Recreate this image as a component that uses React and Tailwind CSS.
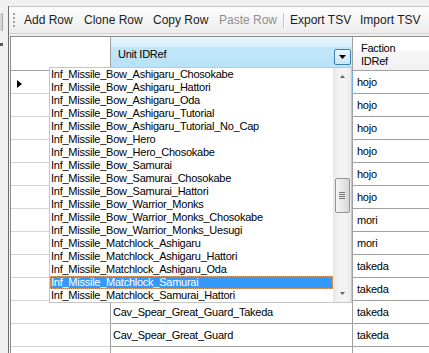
import { useState } from 'react';

const unitOptions = [
    'Inf_Missile_Bow_Ashigaru_Chosokabe',
    'Inf_Missile_Bow_Ashigaru_Hattori',
    'Inf_Missile_Bow_Ashigaru_Oda',
    'Inf_Missile_Bow_Ashigaru_Tutorial',
    'Inf_Missile_Bow_Ashigaru_Tutorial_No_Cap',
    'Inf_Missile_Bow_Hero',
    'Inf_Missile_Bow_Hero_Chosokabe',
    'Inf_Missile_Bow_Samurai',
    'Inf_Missile_Bow_Samurai_Chosokabe',
    'Inf_Missile_Bow_Samurai_Hattori',
    'Inf_Missile_Bow_Warrior_Monks',
    'Inf_Missile_Bow_Warrior_Monks_Chosokabe',
    'Inf_Missile_Bow_Warrior_Monks_Uesugi',
    'Inf_Missile_Matchlock_Ashigaru',
    'Inf_Missile_Matchlock_Ashigaru_Hattori',
    'Inf_Missile_Matchlock_Ashigaru_Oda',
    'Inf_Missile_Matchlock_Samurai',
    'Inf_Missile_Matchlock_Samurai_Hattori',
];

// unit cells of the first rows sit under the open list, so they are left blank here
const rows = [
    { unit: '', faction: 'hojo' },
    { unit: '', faction: 'hojo' },
    { unit: '', faction: 'hojo' },
    { unit: '', faction: 'hojo' },
    { unit: '', faction: 'hojo' },
    { unit: '', faction: 'hojo' },
    { unit: '', faction: 'mori' },
    { unit: '', faction: 'mori' },
    { unit: '', faction: 'takeda' },
    { unit: '', faction: 'takeda' },
    { unit: 'Cav_Spear_Great_Guard_Takeda', faction: 'takeda' },
    { unit: 'Cav_Spear_Great_Guard', faction: 'takeda' },
    { unit: '', faction: '' },
];

const toolbarButtons = [
    { label: 'Add Row', width: 'w-[60px]' },
    { label: 'Clone Row', width: 'w-[69px]' },
    { label: 'Copy Row', width: 'w-[66px]' },
    { label: 'Paste Row', width: 'w-[64px]', disabled: true },
];

function App() {
    const [selectedUnit, setSelectedUnit] = useState('Inf_Missile_Matchlock_Samurai');

    return (
        <div className="w-[429px] h-[353px] overflow-hidden bg-[#f0f0f0] flex font-['Liberation_Sans',Arial,sans-serif] select-none">
            {/* left edge of the neighbouring panel */}
            <div className="w-[8px] shrink-0 flex flex-col pt-[13px]">
                <div className="w-[3px] h-[18px] bg-[#d6d6d6] border-r border-[#a9a9a9]"></div>
                <div className="w-[3px] h-[3px] mt-[12px] bg-[#5a5a5a]"></div>
            </div>

            <div className="flex-1 min-w-0 flex flex-col mt-[6px] border-l border-[#6e6e6e]">
                {/* toolbar */}
                <div className="h-[28px] shrink-0 flex items-center pl-[4px] border-t border-b border-t-[#c6c6c6] border-b-[#d2d2d2] bg-[linear-gradient(to_bottom,#fdfdfd,#f3f3f3_60%,#ececec)] text-[12px] text-[#1c1c1c] whitespace-nowrap">
                    <div className="flex flex-col gap-[2px]">
                        <div className="w-[2px] h-[2px] bg-[#a3a3a3]"></div>
                        <div className="w-[2px] h-[2px] bg-[#a3a3a3]"></div>
                        <div className="w-[2px] h-[2px] bg-[#a3a3a3]"></div>
                        <div className="w-[2px] h-[2px] bg-[#a3a3a3]"></div>
                    </div>
                    <div className="flex items-center ml-[9px]">
                        {toolbarButtons.map((b) => (
                            <div key={b.label} className={`${b.width} ${b.disabled ? 'text-[#8f8f8f]' : ''}`}>
                                {b.label}
                            </div>
                        ))}
                        <div className="w-[1px] h-[15px] bg-[#c4c4c4] border-r border-white box-content"></div>
                        <div className="w-[70px] ml-[5px]">Export TSV</div>
                        <div>Import TSV</div>
                    </div>
                </div>

                {/* grid */}
                <div className="relative flex-1 mt-[2px] ml-[1px] bg-white border-t border-l border-[#8c8c8c] text-[11px] tracking-[-0.25px] text-black whitespace-nowrap overflow-hidden">
                    <div className="flex h-[34px] border-b border-[#a0a0a0]">
                        <div className="w-[100px] shrink-0 bg-white border-r border-[#a0a0a0]"></div>
                        <div className="w-[242px] shrink-0 flex items-center pl-[7px] pr-[1px] border-r border-[#a0a0a0] bg-[linear-gradient(to_bottom,#e4f5fc_0%,#dcf1fb_28%,#c1e6f9_30%,#b7e2f8_100%)]">
                            <span className="mt-[1px]">Unit IDRef</span>
                            <div className="ml-auto mt-[7px] w-[17px] h-[16px] flex items-center justify-center border border-[#3c7fb1] rounded-[2px] bg-[linear-gradient(to_bottom,#eaf6fd,#c7e6f7)]">
                                <svg width="7" height="4" viewBox="0 0 7 4">
                                    <path d="M0 0h7L3.5 4z" fill="#000" />
                                </svg>
                            </div>
                        </div>
                        <div className="flex-1 flex flex-col justify-center pl-[8px] pt-[3px] leading-[13px] bg-[linear-gradient(to_bottom,#ffffff_0%,#ffffff_40%,#f7f7f7_42%,#f1f1f1_100%)]">
                            <span>Faction</span>
                            <span>IDRef</span>
                        </div>
                    </div>

                    {rows.map((row, i) => (
                        <div key={i} className="flex h-[23px]">
                            <div className="w-[100px] shrink-0 bg-white border-b border-r border-b-[#d4d4d4] border-r-[#a0a0a0] pl-[6px] pt-[9px]">
                                {i === 0 && (
                                    <svg width="5" height="8" viewBox="0 0 5 8">
                                        <path d="M0 0l5 4-5 4z" fill="#000" />
                                    </svg>
                                )}
                            </div>
                            <div className="w-[242px] shrink-0 flex items-center pl-[2px] border-b border-r border-[#a0a0a0] overflow-hidden">
                                {row.unit}
                            </div>
                            <div
                                className={`flex-1 flex items-center pl-[4px] border-b border-[#a0a0a0] ${
                                    i === 0 ? 'border-l border-l-[#7aaee0] -ml-[1px]' : ''
                                }`}
                            >
                                {row.faction}
                            </div>
                        </div>
                    ))}

                    {/* open dropdown list of the Unit IDRef cell */}
                    <div className="absolute left-[38px] top-[30px] w-[303px] h-[236px] flex bg-white border border-[#c6c6c6] leading-[13px]">
                        <div className="flex-1 min-w-0 flex flex-col overflow-hidden">
                            {unitOptions.map((u) => (
                                <div
                                    key={u}
                                    onClick={() => setSelectedUnit(u)}
                                    className={`h-[13px] shrink-0 pl-[1px] ${
                                        u === selectedUnit
                                            ? 'bg-[#3399ff] text-white outline outline-1 outline-dotted -outline-offset-1 outline-[#e6a266]'
                                            : ''
                                    }`}
                                >
                                    {u}
                                </div>
                            ))}
                        </div>
                        <div className="w-[18px] shrink-0 flex flex-col bg-[linear-gradient(to_right,#e6e6e6,#f2f2f2_30%,#f4f4f4_70%,#e9e9e9)]">
                            <div className="h-[17px] flex items-center justify-center">
                                <svg width="5" height="3" viewBox="0 0 5 3">
                                    <path d="M2.5 0L5 3H0z" fill="#5f5f5f" />
                                </svg>
                            </div>
                            <div className="flex-1 flex justify-center">
                                <div className="mt-[93px] w-[15px] h-[35px] flex flex-col items-center justify-center gap-[1px] rounded-[2px] border border-[#959595] bg-[linear-gradient(to_right,#f5f5f5,#e7e7e7_50%,#d6d6d6)]">
                                    <div className="w-[6px] h-[1px] bg-[#777]"></div>
                                    <div className="w-[6px] h-[1px] bg-[#777]"></div>
                                    <div className="w-[6px] h-[1px] bg-[#777]"></div>
                                    <div className="w-[6px] h-[1px] bg-[#777]"></div>
                                </div>
                            </div>
                            <div className="h-[17px] flex items-center justify-center">
                                <svg width="5" height="3" viewBox="0 0 5 3">
                                    <path d="M0 0h5L2.5 3z" fill="#5f5f5f" />
                                </svg>
                            </div>
                        </div>
                    </div>
                </div>
            </div>
        </div>
    );
}

export default App;
